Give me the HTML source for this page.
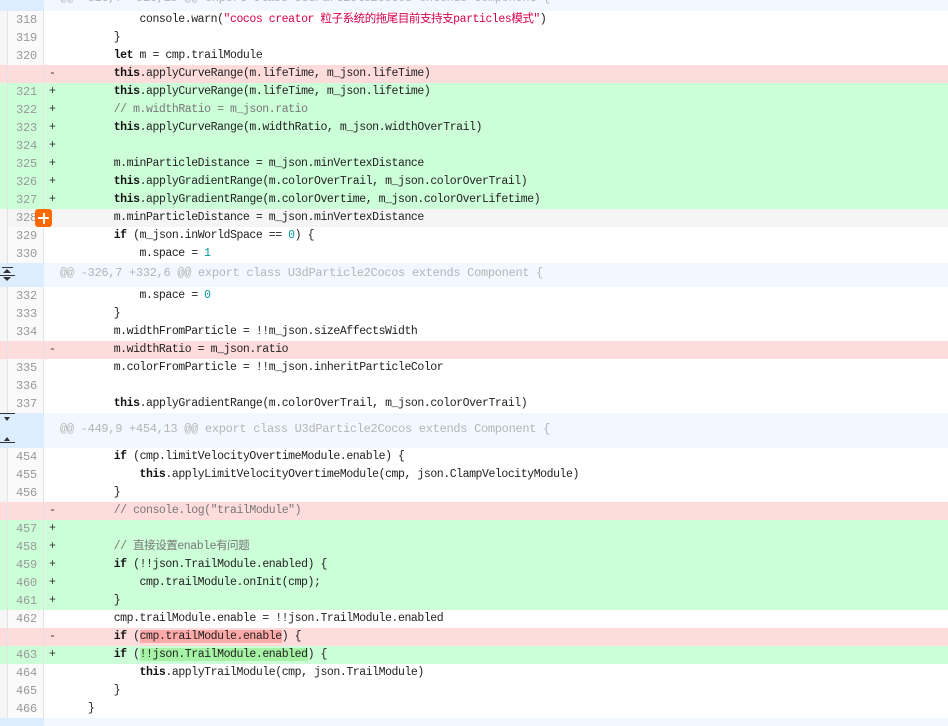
<!DOCTYPE html>
<html><head><meta charset="utf-8"><style>
*{margin:0;padding:0;box-sizing:border-box}
body{width:948px;height:726px;overflow:hidden;background:#fff;position:relative;font-family:"Liberation Mono","Noto Sans CJK SC",monospace;font-size:11.5px;letter-spacing:-0.44px;color:#222}
.r{position:absolute;left:0;width:948px;height:18px;line-height:18px}
.g1{position:absolute;left:0;top:0;width:8px;height:100%;background:#f6f6f6;border-right:1px solid #e3e3e3}
.g2{position:absolute;left:8px;top:0;width:36px;height:100%;border-right:1px solid #e3e3e3;text-align:right;padding-right:6px;color:#999;background:#fafafa;font-size:12px;letter-spacing:-0.2px}
.s{position:absolute;left:49px;top:0;color:#333}
.c{position:absolute;left:62px;top:0;white-space:pre}
.d{background:#ffdcdc}.d .g2,.d .g1{background:#ffdcdc}
.a{background:#ccffd8}.a .g2,.a .g1{background:#ccffd8}
.x{background:#f5f5f5}.x .g2{background:#f5f5f5}
.h{position:absolute;left:0;width:948px;background:#f1f8ff}
.h .g{position:absolute;left:0;top:0;width:44px;height:100%;background:#dbedff}
.h .t{position:absolute;left:60px;color:#b5b5b5;white-space:pre;font-size:12px;letter-spacing:-0.3px}
b{font-weight:bold;color:#111}
.str{color:#d6004e}.n{color:#099}.cm{color:#777}
.hd{background:#ffa9a9}.ha{background:#a6f3a6}
</style></head><body>
<div class="h" style="top:0;height:11px"><div class="g"></div><div class="t" style="top:-9px">@@ -316,7 +316,13 @@ export class U3dParticle2Cocos extends Component {</div></div>

<div class="r" style="top:11px"><div class="g1"></div><div class="g2">318</div><div class="c">            console.warn(<span class="str">"cocos creator 粒子系统的拖尾目前支持支particles模式"</span>)</div></div>
<div class="r" style="top:29px"><div class="g1"></div><div class="g2">319</div><div class="c">        }</div></div>
<div class="r" style="top:47px"><div class="g1"></div><div class="g2">320</div><div class="c">        <b>let</b> m = cmp.trailModule</div></div>
<div class="r d" style="top:65px"><div class="g1"></div><div class="g2"></div><div class="s">-</div><div class="c">        <b>this</b>.applyCurveRange(m.lifeTime, m_json.lifeTime)</div></div>
<div class="r a" style="top:83px"><div class="g1"></div><div class="g2">321</div><div class="s">+</div><div class="c">        <b>this</b>.applyCurveRange(m.lifeTime, m_json.lifetime)</div></div>
<div class="r a" style="top:101px"><div class="g1"></div><div class="g2">322</div><div class="s">+</div><div class="c">        <span class="cm">// m.widthRatio = m_json.ratio</span></div></div>
<div class="r a" style="top:119px"><div class="g1"></div><div class="g2">323</div><div class="s">+</div><div class="c">        <b>this</b>.applyCurveRange(m.widthRatio, m_json.widthOverTrail)</div></div>
<div class="r a" style="top:137px"><div class="g1"></div><div class="g2">324</div><div class="s">+</div></div>
<div class="r a" style="top:155px"><div class="g1"></div><div class="g2">325</div><div class="s">+</div><div class="c">        m.minParticleDistance = m_json.minVertexDistance</div></div>
<div class="r a" style="top:173px"><div class="g1"></div><div class="g2">326</div><div class="s">+</div><div class="c">        <b>this</b>.applyGradientRange(m.colorOverTrail, m_json.colorOverTrail)</div></div>
<div class="r a" style="top:191px"><div class="g1"></div><div class="g2">327</div><div class="s">+</div><div class="c">        <b>this</b>.applyGradientRange(m.colorOvertime, m_json.colorOverLifetime)</div></div>
<div class="r x" style="top:209px"><div class="g1"></div><div class="g2">328</div><div class="c">        m.minParticleDistance = m_json.minVertexDistance</div>
<div style="position:absolute;left:35px;top:0;width:17px;height:18px;background:#ff6a00;border-radius:3px"><div style="position:absolute;left:3px;top:8px;width:11px;height:2px;background:#fff"></div><div style="position:absolute;left:7.5px;top:3.5px;width:2px;height:11px;background:#fff"></div></div></div>
<div class="r" style="top:227px"><div class="g1"></div><div class="g2">329</div><div class="c">        <b>if</b> (m_json.inWorldSpace == <span class="n">0</span>) {</div></div>
<div class="r" style="top:245px"><div class="g1"></div><div class="g2">330</div><div class="c">            m.space = <span class="n">1</span></div></div>

<div class="h" style="top:263px;height:24px"><div class="g"></div>
<div style="position:absolute;left:2px;top:4px;width:11px;height:1px;background:#333"></div>
<div style="position:absolute;left:3px;top:6px;border:4px solid transparent;border-bottom:4px solid #333;border-top:0;width:0"></div>
<div style="position:absolute;left:0;top:12px;width:15px;height:1px;background:#333"></div>
<div style="position:absolute;left:3px;top:14px;border:4px solid transparent;border-top:4px solid #333;border-bottom:0;width:0"></div>
<div class="t" style="top:3px">@@ -326,7 +332,6 @@ export class U3dParticle2Cocos extends Component {</div></div>

<div class="r" style="top:287px"><div class="g1"></div><div class="g2">332</div><div class="c">            m.space = <span class="n">0</span></div></div>
<div class="r" style="top:305px"><div class="g1"></div><div class="g2">333</div><div class="c">        }</div></div>
<div class="r" style="top:323px"><div class="g1"></div><div class="g2">334</div><div class="c">        m.widthFromParticle = !!m_json.sizeAffectsWidth</div></div>
<div class="r d" style="top:341px"><div class="g1"></div><div class="g2"></div><div class="s">-</div><div class="c">        m.widthRatio = m_json.ratio</div></div>
<div class="r" style="top:359px"><div class="g1"></div><div class="g2">335</div><div class="c">        m.colorFromParticle = !!m_json.inheritParticleColor</div></div>
<div class="r" style="top:377px"><div class="g1"></div><div class="g2">336</div></div>
<div class="r" style="top:395px"><div class="g1"></div><div class="g2">337</div><div class="c">        <b>this</b>.applyGradientRange(m.colorOverTrail, m_json.colorOverTrail)</div></div>

<div class="h" style="top:413px;height:35px"><div class="g"></div>
<div style="position:absolute;left:0;top:0;width:15px;height:1px;background:#333"></div>
<div style="position:absolute;left:4px;top:4px;border:3px solid transparent;border-top:4px solid #333;border-bottom:0;width:0"></div>
<div style="position:absolute;left:4px;top:24px;border:3px solid transparent;border-bottom:4px solid #333;border-top:0;width:0"></div>
<div style="position:absolute;left:0;top:29px;width:15px;height:1px;background:#333"></div>
<div class="t" style="top:9px">@@ -449,9 +454,13 @@ export class U3dParticle2Cocos extends Component {</div></div>

<div class="r" style="top:448px"><div class="g1"></div><div class="g2">454</div><div class="c">        <b>if</b> (cmp.limitVelocityOvertimeModule.enable) {</div></div>
<div class="r" style="top:466px"><div class="g1"></div><div class="g2">455</div><div class="c">            <b>this</b>.applyLimitVelocityOvertimeModule(cmp, json.ClampVelocityModule)</div></div>
<div class="r" style="top:484px"><div class="g1"></div><div class="g2">456</div><div class="c">        }</div></div>
<div class="r d" style="top:502px"><div class="g1"></div><div class="g2"></div><div class="s">-</div><div class="c">        <span class="cm">// console.log("trailModule")</span></div></div>
<div class="r a" style="top:520px"><div class="g1"></div><div class="g2">457</div><div class="s">+</div></div>
<div class="r a" style="top:538px"><div class="g1"></div><div class="g2">458</div><div class="s">+</div><div class="c">        <span class="cm">// 直接设置enable有问题</span></div></div>
<div class="r a" style="top:556px"><div class="g1"></div><div class="g2">459</div><div class="s">+</div><div class="c">        <b>if</b> (!!json.TrailModule.enabled) {</div></div>
<div class="r a" style="top:574px"><div class="g1"></div><div class="g2">460</div><div class="s">+</div><div class="c">            cmp.trailModule.onInit(cmp);</div></div>
<div class="r a" style="top:592px"><div class="g1"></div><div class="g2">461</div><div class="s">+</div><div class="c">        }</div></div>
<div class="r" style="top:610px"><div class="g1"></div><div class="g2">462</div><div class="c">        cmp.trailModule.enable = !!json.TrailModule.enabled</div></div>
<div class="r d" style="top:628px"><div class="g1"></div><div class="g2"></div><div class="s">-</div><div class="c">        <b>if</b> (<span class="hd">cmp.trailModule.enable</span>) {</div></div>
<div class="r a" style="top:646px"><div class="g1"></div><div class="g2">463</div><div class="s">+</div><div class="c">        <b>if</b> (<span class="ha">!!json.TrailModule.enabled</span>) {</div></div>
<div class="r" style="top:664px"><div class="g1"></div><div class="g2">464</div><div class="c">            <b>this</b>.applyTrailModule(cmp, json.TrailModule)</div></div>
<div class="r" style="top:682px"><div class="g1"></div><div class="g2">465</div><div class="c">        }</div></div>
<div class="r" style="top:700px"><div class="g1"></div><div class="g2">466</div><div class="c">    }</div></div>
<div class="h" style="top:718px;height:8px"><div class="g"></div></div>
</body></html>
